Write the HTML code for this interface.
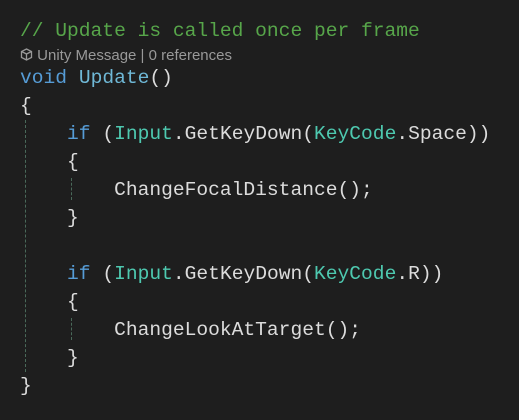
<!DOCTYPE html>
<html><head><style>
body{margin:0;background:#1e1e1e;width:519px;height:420px;overflow:hidden;position:relative}
.l{position:absolute;left:20px;font-family:"Liberation Mono",monospace;font-size:19.6px;line-height:28px;height:28px;color:#dcdcdc;white-space:pre}
.c{color:#57a64a}.k{color:#569cd6}.t{color:#4ec9b0}
.lens{position:absolute;left:20px;top:46px;font-family:"Liberation Sans",sans-serif;font-size:15px;color:#999;line-height:20px;white-space:pre}
.g{position:absolute;border-left:1px dashed #4a6a5a;width:0}
</style></head><body>
<div class="l c" style="top:17px">// Update is called once per frame</div>
<div class="lens"><svg width="13" height="13" viewBox="0 0 13 13" style="vertical-align:-1px"><path d="M6.5 1L11.5 3.5V9.5L6.5 12L1.5 9.5V3.5Z M1.5 3.5L6.5 6L11.5 3.5 M6.5 6V12" fill="none" stroke="#999" stroke-width="1.3"/></svg> Unity Message | 0 references</div>
<div class="l" style="top:64px"><span class="k">void</span> <span class="t" style="color:#6fb8d6">Update</span>()</div>
<div class="l" style="top:92px">{</div>
<div class="l" style="top:120px">    <span class="k">if</span> (<span class="t">Input</span>.GetKeyDown(<span class="t">KeyCode</span>.Space))</div>
<div class="l" style="top:148px">    {</div>
<div class="l" style="top:176px">        ChangeFocalDistance();</div>
<div class="l" style="top:204px">    }</div>
<div class="l" style="top:260px">    <span class="k">if</span> (<span class="t">Input</span>.GetKeyDown(<span class="t">KeyCode</span>.R))</div>
<div class="l" style="top:288px">    {</div>
<div class="l" style="top:316px">        ChangeLookAtTarget();</div>
<div class="l" style="top:344px">    }</div>
<div class="l" style="top:372px">}</div>
<div class="g" style="left:25px;top:120px;height:252px"></div>
<div class="g" style="left:71px;top:178px;height:22px"></div>
<div class="g" style="left:71px;top:318px;height:22px"></div>
</body></html>
